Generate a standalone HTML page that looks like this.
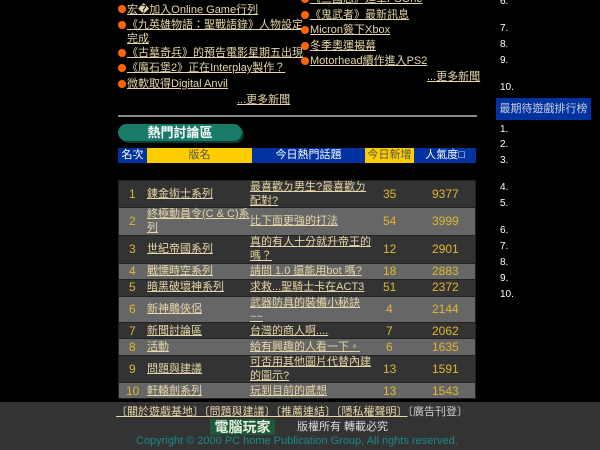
<!DOCTYPE html>
<html><head><meta charset="utf-8"><style>
body{margin:0;width:600px;height:450px;background:#000;overflow:hidden;position:relative;font-family:"Liberation Sans","Noto Sans CJK TC",sans-serif;font-size:11px;}
.a{position:absolute;white-space:nowrap;line-height:14px}
.l{color:#e6d7a8;text-decoration:underline}
.b{position:absolute;width:8px;height:8px;border-radius:50%;background:#ff6600}
.n{position:absolute;left:500px;color:#fff;font-size:10px}
.r{position:absolute;left:119px;width:356px}
.c{position:absolute;color:#e0b830;font-size:12px}
</style></head><body>
<div class="b" style="left:118px;top:5px"></div><div class="a l" style="left:127px;top:3px">宏�加入Online Game行列</div>
<div class="b" style="left:118px;top:21px"></div><div class="a l" style="left:127px;top:18px">《九英雄物語：聖戰語錄》人物設定</div>
<div class="a l" style="left:127px;top:32px">完成</div>
<div class="b" style="left:118px;top:49px"></div><div class="a l" style="left:127px;top:46px">《古墓奇兵》的預告電影星期五出現</div>
<div class="b" style="left:118px;top:64px"></div><div class="a l" style="left:127px;top:61px">《魔石堡2》正在Interplay製作？</div>
<div class="b" style="left:118px;top:80px"></div><div class="a l" style="left:127px;top:77px">微軟取得Digital Anvil</div>
<div class="a l" style="left:237px;top:93px">...更多新聞</div>
<div class="b" style="left:301px;top:-5px"></div><div class="a l" style="left:310px;top:-8px">《三國志》進軍PSOne</div>
<div class="b" style="left:301px;top:11px"></div><div class="a l" style="left:310px;top:8px">《鬼武者》最新訊息</div>
<div class="b" style="left:301px;top:26px"></div><div class="a l" style="left:310px;top:23px">Micron簽下Xbox</div>
<div class="b" style="left:301px;top:42px"></div><div class="a l" style="left:310px;top:39px">冬季奧運揭幕</div>
<div class="b" style="left:301px;top:57px"></div><div class="a l" style="left:310px;top:54px">Motorhead續作進入PS2</div>
<div class="a l" style="left:427px;top:70px">...更多新聞</div>
<div style="position:absolute;left:118px;top:115px;width:359px;height:2px;background:#888"></div>
<div style="position:absolute;left:118px;top:124px;width:124px;height:17px;border-radius:9px;background:#1a7a68;box-shadow:2px 2px 0 #0a3a30;color:#fff;font-weight:bold;font-size:13px;text-align:center;line-height:17px">熱門討論區</div>
<div style="position:absolute;left:118px;top:148px;height:15px;width:358px;color:#fff;line-height:15px;text-align:center">
<div style="position:absolute;left:0;width:29px;height:15px;background:#0033a0">名次</div>
<div style="position:absolute;left:29px;width:105px;height:15px;background:#ffcc00;color:#555">版名</div>
<div style="position:absolute;left:134px;width:113px;height:15px;background:#0033a0">今日熱門話題</div>
<div style="position:absolute;left:247px;width:49px;height:15px;background:#ffcc00;color:#555">今日新增</div>
<div style="position:absolute;left:296px;width:62px;height:15px;background:#0033a0">人氣度□</div>
</div>
<div style="position:absolute;left:118px;top:180px;width:358px;height:219px;background:#222"></div>
<div class="r" style="top:181px;height:26px;background:#333"></div>
<div class="r" style="top:208px;height:27px;background:#666"></div>
<div class="r" style="top:236px;height:27px;background:#333"></div>
<div class="r" style="top:264px;height:15px;background:#666"></div>
<div class="r" style="top:280px;height:16px;background:#333"></div>
<div class="r" style="top:297px;height:25px;background:#666"></div>
<div class="r" style="top:323px;height:15px;background:#333"></div>
<div class="r" style="top:339px;height:16px;background:#666"></div>
<div class="r" style="top:356px;height:26px;background:#333"></div>
<div class="r" style="top:383px;height:15px;background:#666"></div>
<div class="a c" style="left:129px;top:187px">1</div><div class="a l" style="left:147px;top:187px">鍊金術士系列</div><div class="a l" style="left:250px;top:180px">最喜歡ㄉ男生?最喜歡ㄉ<br>配對?</div><div class="a c" style="left:383px;top:187px">35</div><div class="a c" style="left:432px;top:187px">9377</div>
<div class="a c" style="left:129px;top:214px">2</div><div class="a l" style="left:147px;top:207px">終極動員令(C &amp; C)系<br>列</div><div class="a l" style="left:250px;top:214px">比下面更強的打法</div><div class="a c" style="left:383px;top:214px">54</div><div class="a c" style="left:432px;top:214px">3999</div>
<div class="a c" style="left:129px;top:242px">3</div><div class="a l" style="left:147px;top:242px">世紀帝國系列</div><div class="a l" style="left:250px;top:235px">真的有人十分就升帝王的<br>嗎？</div><div class="a c" style="left:383px;top:242px">12</div><div class="a c" style="left:432px;top:242px">2901</div>
<div class="a c" style="left:129px;top:264px">4</div><div class="a l" style="left:147px;top:264px">戰慄時空系列</div><div class="a l" style="left:250px;top:264px">請問 1.0 還能用bot 嗎?</div><div class="a c" style="left:383px;top:264px">18</div><div class="a c" style="left:432px;top:264px">2883</div>
<div class="a c" style="left:129px;top:280px">5</div><div class="a l" style="left:147px;top:280px">暗黑破壞神系列</div><div class="a l" style="left:250px;top:280px">求救...聖騎士卡在ACT3</div><div class="a c" style="left:383px;top:280px">51</div><div class="a c" style="left:432px;top:280px">2372</div>
<div class="a c" style="left:129px;top:302px">6</div><div class="a l" style="left:147px;top:302px">新神鵰俠侶</div><div class="a l" style="left:250px;top:296px">武器防具的裝備小秘訣<br>~~</div><div class="a c" style="left:386px;top:302px">4</div><div class="a c" style="left:432px;top:302px">2144</div>
<div class="a c" style="left:129px;top:324px">7</div><div class="a l" style="left:147px;top:324px">新聞討論區</div><div class="a l" style="left:250px;top:324px">台灣的商人啊....</div><div class="a c" style="left:386px;top:324px">7</div><div class="a c" style="left:432px;top:324px">2062</div>
<div class="a c" style="left:129px;top:340px">8</div><div class="a l" style="left:147px;top:340px">活動</div><div class="a l" style="left:250px;top:340px">給有興趣的人看一下。</div><div class="a c" style="left:386px;top:340px">6</div><div class="a c" style="left:432px;top:340px">1635</div>
<div class="a c" style="left:129px;top:362px">9</div><div class="a l" style="left:147px;top:362px">問題與建議</div><div class="a l" style="left:250px;top:355px">可否用其他圖片代替內建<br>的圖示?</div><div class="a c" style="left:383px;top:362px">13</div><div class="a c" style="left:432px;top:362px">1591</div>
<div class="a c" style="left:126px;top:384px">10</div><div class="a l" style="left:147px;top:384px">軒轅劍系列</div><div class="a l" style="left:250px;top:384px">玩到目前的感想</div><div class="a c" style="left:383px;top:384px">13</div><div class="a c" style="left:432px;top:384px">1543</div>
<div style="position:absolute;left:0;top:402px;width:600px;height:48px;background:#333"></div>
<div class="a" style="left:116px;top:405px;color:#ccc"><span class="l">〔關於遊戲基地〕</span><span class="l">〔問題與建議〕</span><span class="l">〔推薦連結〕</span><span class="l">〔隱私權聲明〕</span>〔廣告刊登〕</div>
<div class="a" style="left:210px;top:419px;width:65px;height:16px;background:#1c5a3a;color:#e8f0e0;font-weight:bold;font-size:14px;line-height:16px;text-align:center">電腦玩家</div>
<div class="a" style="left:297px;top:420px;color:#ddd">版權所有 轉載必究</div>
<div class="a" style="left:136px;top:434px;color:#1a8a8a">Copyright © 2000 PC home Publication Group, All rights reserved.</div>
<div class="a n" style="top:-5px">6.</div>
<div class="a n" style="top:22px">7.</div>
<div class="a n" style="top:38px">8.</div>
<div class="a n" style="top:54px">9.</div>
<div class="a n" style="top:81px">10.</div>
<div style="position:absolute;left:496px;top:98px;width:95px;height:22px;background:#0033a0;color:#ccd;font-size:11px;line-height:22px;text-align:center">最期待遊戲排行榜</div>
<div class="a n" style="top:123px">1.</div>
<div class="a n" style="top:138px">2.</div>
<div class="a n" style="top:154px">3.</div>
<div class="a n" style="top:181px">4.</div>
<div class="a n" style="top:197px">5.</div>
<div class="a n" style="top:224px">6.</div>
<div class="a n" style="top:240px">7.</div>
<div class="a n" style="top:256px">8.</div>
<div class="a n" style="top:272px">9.</div>
<div class="a n" style="top:288px">10.</div>
</body></html>
